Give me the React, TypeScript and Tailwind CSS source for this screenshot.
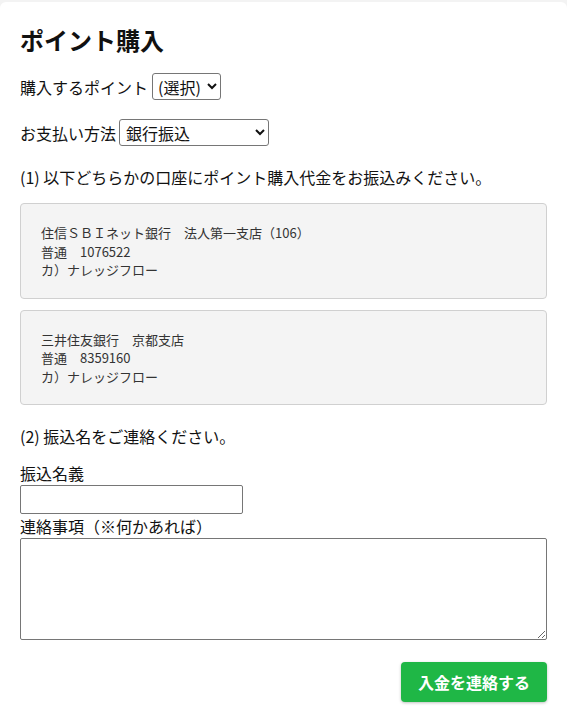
import React from "react";

const accounts = [
    ["住信ＳＢＩネット銀行　法人第一支店（106）", "普通　1076522", "カ）ナレッジフロー"],
    ["三井住友銀行　京都支店", "普通　8359160", "カ）ナレッジフロー"],
];

const App: React.FC = () => {
    return <div className="min-h-screen bg-[#f3f3f3] pt-[2px] font-['Noto_Sans_CJK_JP',sans-serif] text-[16px] leading-6 text-[#111]">
        <div className="bg-white rounded-t-[6px] px-5 pt-5 pb-6">
            <h1 className="text-[24px] leading-9 font-bold">ポイント購入</h1>
            <div className="mt-[15px] flex items-center gap-[4px]">
                <span>購入するポイント</span>
                <select className="h-[27px] border border-[#767676] rounded-[3px] bg-white pl-[1px] pr-[3px]">
                    <option>(選択)</option>
                </select>
            </div>
            <div className="mt-[19px] flex items-center gap-[3px]">
                <span>お支払い方法</span>
                <select className="h-[27px] w-[150px] border border-[#767676] rounded-[3px] bg-white pl-[2px] pr-[3px]">
                    <option>銀行振込</option>
                </select>
            </div>
            <p className="mt-[19px]">(1) 以下どちらかの口座にポイント購入代金をお振込みください。</p>
            <div className="mt-[14px] flex flex-col gap-[11px]">
                {accounts.map((lines, i) => (
                    <div key={i} className="rounded-[4px] border border-[#d0d0d0] bg-[#f4f4f4] px-5 pt-5 pb-[18px] text-[13px] leading-[18.5px] text-[#333]">
                        {lines.map((l, j) => <div key={j}>{l}</div>)}
                    </div>
                ))}
            </div>
            <p className="mt-[19px]">(2) 振込名をご連絡ください。</p>
            <label className="mt-[13px] block">振込名義</label>
            <input type="text" className="block h-[29px] w-[223px] border border-[#767676] rounded-[2px] px-1" />
            <label className="block">連絡事項（※何かあれば）</label>
            <textarea className="block h-[102px] w-full border border-[#767676] rounded-[2px] px-1" />
            <div className="mt-[22px] flex justify-end">
                <button className="h-10 rounded-[4px] bg-[#1fb746] px-[17px] font-bold text-white shadow-[0_1px_3px_rgba(0,0,0,0.25)]">入金を連絡する</button>
            </div>
        </div>
    </div>;
};

export default App;
